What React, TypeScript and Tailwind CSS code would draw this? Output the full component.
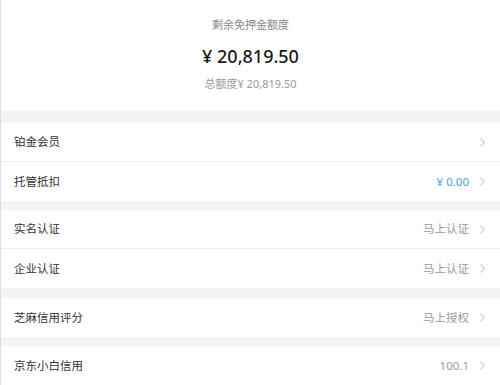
import React from "react";

const font = { fontFamily: '"Noto Sans", "Noto Sans CJK SC", sans-serif' };

function Chevron() {
  return (
    <svg width="7" height="11" viewBox="0 0 7 11" className="ml-[10px] shrink-0">
      <path d="M1.5 1.5 L5.5 5.5 L1.5 9.5" fill="none" stroke="#cfcfcf" strokeWidth="1.1" />
    </svg>
  );
}

function Row({ label, value, valueClass = "text-[#9a9a9a]", border = false }: { label: string; value?: string; valueClass?: string; border?: boolean }) {
  return (
    <div className={`flex h-[39px] items-center bg-white pl-[13px] pr-[14px] ${border ? "border-b border-[#eeeeee]" : ""}`}>
      <span className="flex-1 text-[11.5px] text-[#333333]">{label}</span>
      {value && <span className={`text-[11.5px] ${valueClass}`}>{value}</span>}
      <Chevron />
    </div>
  );
}

export default function App() {
  return (
    <div className="w-[500px] h-[385px] overflow-hidden bg-[#f4f4f4] border-l border-[#dddddd]" style={font}>
      <div className="flex h-[111px] flex-col items-center bg-white pt-[17px]">
        <div className="text-[11px] leading-[16px] text-[#8a8a8a]">剩余免押金额度</div>
        <div className="mt-[11px] text-[18px] leading-[24px] font-medium text-[#1a1a1a]">¥ 20,819.50</div>
        <div className="mt-[8px] text-[11px] leading-[16px] text-[#9a9a9a]">总额度¥ 20,819.50</div>
      </div>
      <div className="mt-[12px]">
        <Row label="铂金会员" border />
        <Row label="托管抵扣" value="¥ 0.00" valueClass="text-[#4a9ee0]" />
      </div>
      <div className="mt-[9px]">
        <Row label="实名认证" value="马上认证" border />
        <Row label="企业认证" value="马上认证" />
      </div>
      <div className="mt-[10px]">
        <Row label="芝麻信用评分" value="马上授权" />
      </div>
      <div className="mt-[9px]">
        <Row label="京东小白信用" value="100.1" />
      </div>
    </div>
  );
}
